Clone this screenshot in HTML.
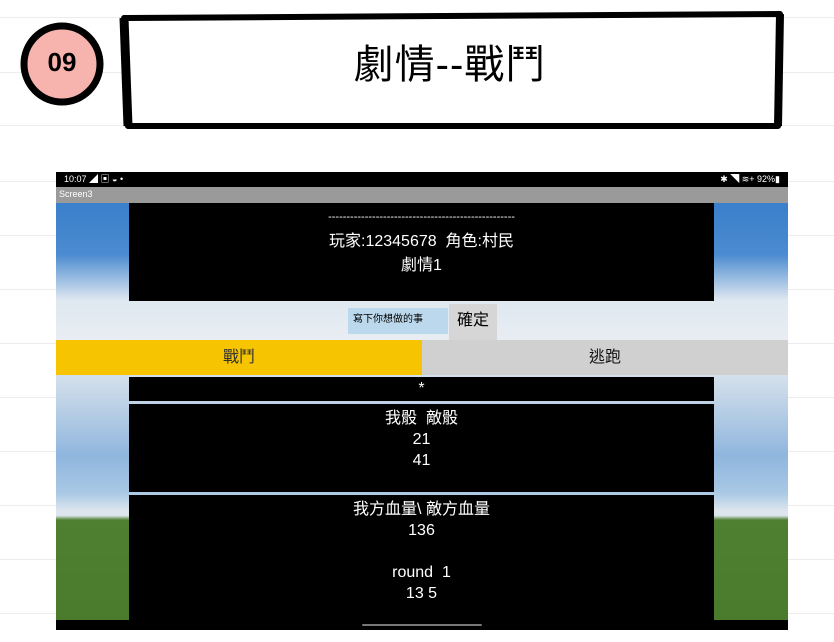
<!DOCTYPE html>
<html><head><meta charset="utf-8"><style>
body{margin:0;width:834px;height:642px;position:relative;background:#fff;overflow:hidden;font-family:"Liberation Sans","Noto Sans CJK TC",sans-serif}
.ln{position:absolute;left:0;width:834px;height:1px;background:#ececec}
.a{position:absolute}
.blk{position:absolute;background:#000;color:#fff;text-align:center;left:129px;width:585px}
</style></head><body>
<div class="ln" style="top:17px"></div><div class="ln" style="top:72px"></div><div class="ln" style="top:125px"></div><div class="ln" style="top:181px"></div><div class="ln" style="top:235px"></div><div class="ln" style="top:289px"></div><div class="ln" style="top:343px"></div><div class="ln" style="top:397px"></div><div class="ln" style="top:451px"></div><div class="ln" style="top:505px"></div><div class="ln" style="top:559px"></div><div class="ln" style="top:613px"></div>

<svg class="a" style="left:0;top:0" width="834" height="140">
<circle cx="62" cy="64" r="38" fill="#f7b3ad" stroke="#000" stroke-width="7"/>
<path d="M124 18 L780 14 L778 126 L128 126 Z" fill="#fff" stroke="#000" stroke-width="6" stroke-linejoin="round"/>
<path d="M124 18 L128 126" stroke="#000" stroke-width="9"/>
<path d="M780 14 L778 126" stroke="#000" stroke-width="8"/>
</svg>
<div class="a" style="left:36px;top:47px;width:52px;text-align:center;font:bold 26px 'Liberation Sans',sans-serif">09</div>
<div class="a" style="left:200px;top:32px;width:500px;text-align:center;font-size:40px;font-weight:normal;letter-spacing:1px">劇情--戰鬥</div>

<div class="a" style="left:56px;top:172px;width:732px;height:458px;background:linear-gradient(#2f78c8 0%,#4b8bd0 18%,#dfe8f0 28%,#e9eef3 38%,#c8d8e8 48%,#8fb6de 62%,#a9c8e4 70%,#dde6ee 74%,#dde6ee 75%,#4f7f30 76%,#4a7a2c 100%)"></div>
<div class="a" style="left:56px;top:172px;width:732px;height:15px;background:#000;color:#fff;font-size:9px;line-height:15px"><span style="margin-left:8px">10:07 ◢ ▣ ◒ •</span><span style="float:right;margin-right:8px">✱ ◥ ≋+ 92%▮</span></div>
<div class="a" style="left:56px;top:187px;width:732px;height:16px;background:#9a9a9a;color:#fff;font-size:9px;line-height:14px;padding-left:3px;box-sizing:border-box">Screen3</div>
<div class="blk" style="top:203px;height:98px;font-size:16px;line-height:21px"><div style="margin-top:4px;font-size:11px">---------------------------------------------------</div><div style="margin-top:3px">玩家:12345678&nbsp;&nbsp;角色:村民</div><div style="margin-top:3px">劇情1</div></div>
<div class="a" style="left:348px;top:308px;width:100px;height:26px;background:#bcd8ec;font-size:10px;line-height:24px;text-indent:5px">寫下你想做的事</div>
<div class="a" style="left:449px;top:304px;width:48px;height:36px;background:#d6d6d6;font-size:16px;line-height:34px;text-align:center">確定</div>
<div class="a" style="left:56px;top:340px;width:366px;height:35px;background:#f6c400;font-size:16px;line-height:35px;text-align:center;color:#333">戰鬥</div>
<div class="a" style="left:422px;top:340px;width:366px;height:35px;background:#d0d0d0;font-size:16px;line-height:35px;text-align:center;color:#111">逃跑</div>
<div class="blk" style="top:377px;height:24px;font-size:16px;line-height:24px">*</div>
<div class="blk" style="top:404px;height:88px;font-size:16px;line-height:21px"><div style="margin-top:4px">我骰&nbsp;&nbsp;敵骰</div><div>21</div><div>41</div></div>
<div class="blk" style="top:495px;height:125px;font-size:16px;line-height:21px"><div style="margin-top:4px">我方血量\ 敵方血量</div><div>136</div><div>&nbsp;</div><div>round&nbsp;&nbsp;1</div><div>13 5</div></div>
<div class="a" style="left:56px;top:620px;width:732px;height:10px;background:#000"></div>
<div class="a" style="left:362px;top:624px;width:120px;height:2px;background:#777;border-radius:1px"></div>
</body></html>
